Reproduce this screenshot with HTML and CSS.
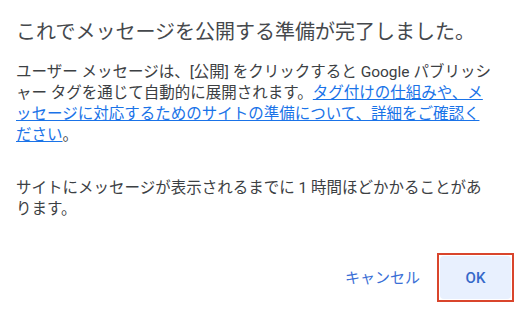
FILE: index.html
```html
<!DOCTYPE html>
<html lang="ja">
<head>
<meta charset="utf-8">
<title>公開の準備</title>
<link rel="stylesheet" href="styles.css">
</head>
<body>
<div class="dialog">
  <h1 class="title">これでメッセージを公開する準備が完了しました。</h1>
  <div class="content">
    <p>ユーザー メッセージは、[公開] をクリックすると Google パブリッシャー タグを通じて自動的に展開されます。<a href="#" class="link">タグ付けの仕組みや、メッセージに対応するためのサイトの準備について、詳細をご確認ください</a>。</p>
    <p class="second">サイトにメッセージが表示されるまでに 1 時間ほどかかることがあります。</p>
  </div>
  <div class="actions">
    <button class="btn cancel">キャンセル</button>
    <div class="ok-wrap">
      <button class="btn ok">OK</button>
      <span class="highlight"></span>
    </div>
  </div>
</div>
</body>
</html>
```

FILE: styles.css
```css
html, body {
  margin: 0;
  padding: 0;
  background: #ffffff;
}

body {
  font-family: Roboto, "Noto Sans CJK JP", sans-serif;
  color: #3c4043;
}

.dialog {
  padding: 18px 0 8px 16px;
  width: 476px;
}

.title {
  margin: 0;
  font-size: 20px;
  line-height: 28px;
  font-weight: 400;
  color: #45484c;
  white-space: nowrap;
}

.content {
  margin-top: 16px;
  font-size: 15.5px;
  line-height: 21px;
}

.content p {
  margin: 0;
}

.content .second {
  margin-top: 32px;
}

.link {
  color: #1a73e8;
  text-decoration: underline;
}

.actions {
  margin-top: 36px;
  width: 495px;
  display: flex;
  justify-content: flex-end;
  align-items: center;
  gap: 12px;
}

.btn {
  display: block;
  margin: 0;
  padding: 0;
  font-family: Roboto, "Noto Sans CJK JP", sans-serif;
  border: none;
  background: transparent;
  font-size: 15px;
  line-height: 20px;
  cursor: pointer;
}

.cancel {
  color: #3b6fd6;
  padding: 0 8px;
  height: 43px;
  font-weight: 400;
}

.ok-wrap {
  position: relative;
  display: flex;
}

.ok {
  width: 71px;
  height: 43px;
  border-radius: 4px;
  background: #e8f0fe;
  color: #3568c9;
  font-weight: 500;
}

.highlight {
  position: absolute;
  left: -3px;
  top: -3px;
  right: -3px;
  bottom: -3px;
  border: 2px solid #d9452c;
  pointer-events: none;
}
```
